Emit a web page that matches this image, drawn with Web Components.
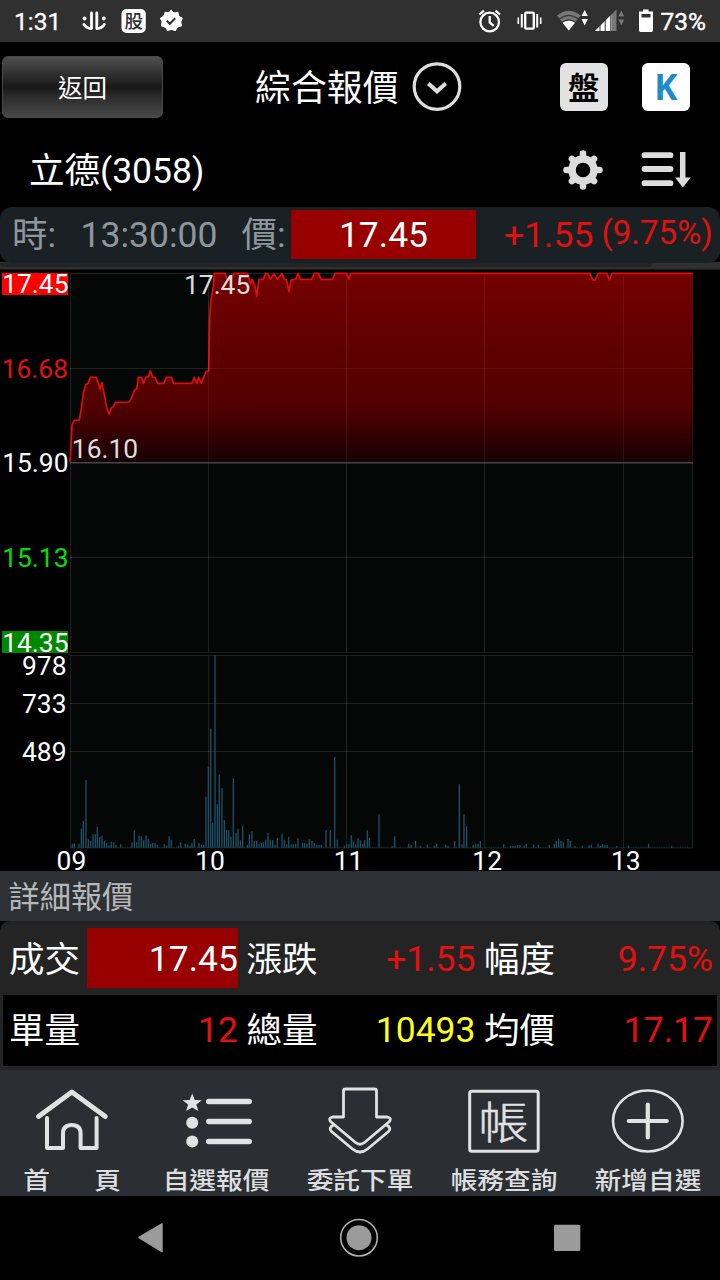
<!DOCTYPE html>
<html lang="zh-Hant">
<head>
<meta charset="utf-8">
<title>綜合報價</title>
<style>
    body {
        margin: 0;
        background: #000;
        color: #fff;
        font-family: Roboto, "Noto Sans CJK TC", sans-serif;
    }
</style>
</head>
<body>
<quote-app></quote-app>

<script>
// name: [viewBox, markup]; every icon is drawn at its viewBox size
const ICONS = {
    north: ['80 9 28 26', `<g fill="none" stroke="#fff" stroke-width="2.800" stroke-linecap="round">
        <path d="M91.500 14v15.500M96.800 14v15.500M84 25.500q2.500 4 7.500 4M104.300 25.500q-2.500 4-7.500 4"/></g>
        <g fill="#fff"><circle cx="84.600" cy="19.500" r="1.900"/><circle cx="103.800" cy="19.500" r="1.900"/></g>`],
    stock: ['120 8 26 26', `<rect x="120.500" y="9" width="24.300" height="24" rx="5" fill="#fff"/>
        <text x="132.700" y="28" text-anchor="middle" font-size="18.500" font-weight="500" fill="#303030">股</text>`],
    verified: ['159 8 24 26', `<g fill="#fff"><circle cx="171" cy="20.700" r="9.300"/>
        <path stroke="#fff" stroke-width="1.500" stroke-linejoin="round" d="M171 10.500l2.600 3.200 4-1.200 1 4 3.400 2-1.500 3.200 .7 4-4 1-2 3.600-3.700-1.200-3.800 1.200-2-3.600-4-1 .7-4-1.700-3.200 3.600-2 1-4 4 1.200z"/></g>
        <path d="M166.800 20.800l3 3 5.400-5.600" fill="none" stroke="#303030" stroke-width="2"/>`],
    alarm: ['480 8 25 26', `<g fill="none" stroke="#fff" stroke-width="2.300"><circle cx="492.700" cy="22" r="9.300"/>
        <path d="M492.700 16v6.500l4 3.300M482.400 14.500l4.500-3.900M498.500 10.600l4.500 3.900"/></g>`],
    vibrate: ['519 8 27 26', `<g fill="none" stroke="#fff" stroke-width="2.300"><rect x="528.200" y="12.700" width="8.600" height="16" rx="1"/>
        <path stroke-width="2" d="M524.800 14v13.500M540.200 14v13.500"/><path stroke-width="1.600" d="M521.300 17.500v6.500M543.700 17.500v6.500"/></g>`],
    wifi: ['558 8 33 26', `<path d="M570.800 30.500L559 15.500q11.800-9.500 23.600 0z" fill="#777"/>
        <g fill="none" stroke="#303030" stroke-width="1.200"><path d="M561.500 18.800q9.300-7 18.600 0M564.200 22.200q6.600-4.800 13.200 0"/></g>
        <path d="M570.800 30.500l-6.200-7.800q6.200-4 12.400 0z" fill="#fff"/>
        <path d="M586.700 10l3.200 6h-6.400zM586.700 25.500l3.200-6.500h-6.400z" fill="#fff"/>`],
    signal: ['595 8 31 26', `<path d="M617.500 9.500V31H596z" fill="#777"/><path d="M612.500 14.500V31H596z" fill="#fff"/>
        <path d="M601 10v22M606.200 10v22M611.800 10v22" stroke="#303030" stroke-width="1"/>
        <path d="M622.300 10.500l3 6h-6zM622.300 25.500l3-6h-6z" fill="#777"/>`],
    battery: ['638 8 16 26', `<path d="M643 9.500h5.500v2H653V30q0 2-1.500 2h-11q-1.500 0-1.500-2V11.500h4z" fill="#fff"/>
        <path d="M641.500 14h9v3.500h-9z" fill="#303030"/>`],
    down: ['412 62 50 50', `<g fill="none" stroke="#dedede"><circle cx="437" cy="86.600" r="22.800" stroke-width="3.200"/>
        <path d="M428.300 83.500l8.700 7.800 8.700-7.800" stroke-width="4"/></g>`],
    gear: ['562 149 42 42', `<g stroke="#dcdcdc" fill="none"><circle cx="583" cy="170" r="11" stroke-width="7.500"/>
        <path stroke-width="6.500" stroke-linecap="round" d="M583 153.500v4M583 182.500v4M566.500 170h4M595.500 170h4M571.900 158.900l2 2M592.100 179.100l2 2M571.900 181.100l2-2M592.100 160.900l2-2"/></g>`],
    sort: ['640 150 52 40', `<g stroke="#dcdcdc"><path stroke-width="5.800" stroke-linecap="round" d="M644.500 155.200h26M644.500 169h26M644.500 183.200h26"/>
        <path stroke-width="5.500" d="M682.700 152v27"/></g><path d="M675 177.500h15.700l-7.800 10z" fill="#dcdcdc"/>`],
    home: ['34 1085 76 70', `<g fill="none" stroke="#e0e2e3" stroke-linecap="round" stroke-linejoin="round">
        <path stroke-width="4.800" d="M38.500 1116.500L71.800 1092l33.500 24.500"/>
        <path stroke-width="4" d="M47 1118v30h16v-14.500q0-8.500 8.800-8.500t8.800 8.500V1148h16v-30"/></g>`],
    list: ['178 1085 76 70', `<path fill="#e0e2e3" d="M192.200 1093.500l2.600 6.500 7 .2-5.500 4.400 2 6.400-6.100-3.500-6.100 3.500 2-6.400-5.500-4.400 7-.2z"/>
        <g fill="#e0e2e3"><circle cx="192.200" cy="1122.800" r="6"/><circle cx="192.200" cy="1141.500" r="6"/></g>
        <path stroke="#e0e2e3" stroke-width="5.500" stroke-linecap="round" d="M208.700 1101.500h40.500M208.700 1121.500h40.500M208.700 1141.500h40.500"/>`],
    order: ['322 1085 76 70', `<g fill="none" stroke="#e0e2e3" stroke-width="2.800" stroke-linejoin="round">
        <path d="M343.500 1091q0-2 2-2h29q2 0 2 2v26h11q4.500 1 2 4.500l-25 21q-4.500 3.500-9 0l-25-21q-2.500-3.500 2-4.500h11z"/>
        <path d="M333.500 1125q-5.500 3-2 6.500l21 17.500q7.500 6 15 0l21-17.500q3.500-3.500-2-6.500"/></g>`],
    account: ['466 1085 76 70', `<rect x="469.700" y="1091.200" width="68.500" height="60" rx="2" fill="none" stroke="#e0e2e3" stroke-width="3"/>
        <text transform="translate(503.500 1138.700) scale(1.03 .9)" text-anchor="middle" font-size="49" font-weight="300" fill="#e0e2e3" stroke="#e0e2e3" stroke-width=".5">帳</text>`],
    add: ['610 1085 76 70', `<g fill="none" stroke="#e0e2e3"><ellipse cx="647.800" cy="1121" rx="34.800" ry="30.500" stroke-width="2.600"/>
        <path stroke-width="4.200" stroke-linecap="round" d="M628.800 1121h38M647.800 1104.500v33"/></g>`],
    back: ['137 1217 42 42', `<path d="M139 1237.500l23-13.500v27.500z" fill="#9b9b9b" stroke="#9b9b9b" stroke-width="1.500" stroke-linejoin="round"/>`],
    circle: ['338.500 1217 42 42', `<circle cx="359.500" cy="1237.700" r="18.300" fill="none" stroke="#b5b5b5" stroke-width="1.500"/>
        <circle cx="359.500" cy="1237.700" r="12.500" fill="#9b9b9b"/>`],
    square: ['546 1217 42 42', `<rect x="554" y="1224.700" width="26.300" height="26.300" rx="1.500" fill="#9b9b9b"/>`],
};

class UiIcon extends HTMLElement {
    connectedCallback() {
        const [box, markup] = ICONS[this.getAttribute('name')];
        const [, , w, h] = box.split(' ');
        this.attachShadow({ mode: 'open' }).innerHTML = `
            <style>
                :host { display: block; flex: none; }
                svg { display: block; overflow: visible; }
            </style>
            <svg width="${w}" height="${h}" viewBox="${box}">${markup}</svg>
        `;
    }
}

class StatusBar extends HTMLElement {
    connectedCallback() {
        this.attachShadow({ mode: 'open' }).innerHTML = `
            <style>
                :host {
                    display: flex;
                    justify-content: space-between;
                    height: 42px;
                    padding: 0 14px 0 14px;
                    background: #303030;
                    font-size: 24.5px;
                    font-weight: 500;
                    line-height: 45px;
                }
                div { display: flex; align-items: center; }
                .left { gap: 12.500px; }
                .time { width: 53.500px; font-weight: 400; -webkit-text-stroke: .3px #fff; }
                .right { gap: 13.500px; }
                .right ui-icon:nth-child(3) { margin-right: -9px; }
                .pct { margin-left: -7px; font-weight: 400; -webkit-text-stroke: .4px #fff; }
            </style>
            <div class="left">
                <span class="time">1:31</span>
                <ui-icon name="north"></ui-icon>
                <ui-icon name="stock"></ui-icon>
                <ui-icon name="verified"></ui-icon>
            </div>
            <div class="right">
                <ui-icon name="alarm"></ui-icon>
                <ui-icon name="vibrate"></ui-icon>
                <ui-icon name="wifi"></ui-icon>
                <ui-icon name="signal"></ui-icon>
                <ui-icon name="battery"></ui-icon>
                <span class="pct">73%</span>
            </div>
        `;
    }
}

class PageHeader extends HTMLElement {
    connectedCallback() {
        this.attachShadow({ mode: 'open' }).innerHTML = `
            <style>
                :host {
                    display: grid;
                    grid-template-columns: 253px 1fr auto;
                    align-items: center;
                    height: 90px;
                    padding: 0 30.500px 0 2px;
                    box-sizing: border-box;
                }
                button {
                    width: 161px;
                    height: 62px;
                    padding: 3px 0 0;
                    border: 1px solid #4a4a4a;
                    border-radius: 6px;
                    background: linear-gradient(#505050, #303030 28%, #181818 50%, #2c2c2c 66%, #474747);
                    color: #fff;
                    font: 24.500px/57px Roboto, "Noto Sans CJK TC", sans-serif;
                }
                .title { display: flex; align-items: center; gap: 13.500px; font-size: 35.900px; line-height: 50px; }
                .title span { padding-top: 3.500px; }
                .tools { display: flex; gap: 34.500px; }
                .tool {
                    width: 47.500px;
                    height: 47.500px;
                    border-radius: 6px;
                    background: #e2e2e2;
                    color: #000;
                    font-size: 31px;
                    font-weight: 700;
                    line-height: 52px;
                    text-align: center;
                }
                .k { background: #fff; color: #1c8ccb; font: 700 35px/48px "Open Sans", sans-serif; }
            </style>
            <button>返回</button>
            <div class="title"><span>綜合報價</span><ui-icon name="down"></ui-icon></div>
            <div class="tools"><div class="tool">盤</div><div class="tool k">K</div></div>
        `;
    }
}

class StockTitle extends HTMLElement {
    connectedCallback() {
        this.attachShadow({ mode: 'open' }).innerHTML = `
            <style>
                :host {
                    display: flex;
                    align-items: center;
                    gap: 36px;
                    height: 75px;
                    padding: 0 28px 0 29px;
                    font-size: 35.500px;
                    line-height: 71px;
                }
                .name { flex: 1; padding-top: 4px; }
            </style>
            <span class="name"><slot></slot></span>
            <ui-icon name="gear"></ui-icon>
            <ui-icon name="sort"></ui-icon>
        `;
    }
}

class QuoteBar extends HTMLElement {
    connectedCallback() {
        this.attachShadow({ mode: 'open' }).innerHTML = `
            <style>
                :host {
                    display: block;
                    height: 63px;
                    background: linear-gradient(#000 55px, #303030 55px 62px, #1a1a1a 62px);
                }
                .bar {
                    display: grid;
                    grid-template-columns: 68.500px 161px 49.500px 185px 129px 1fr;
                    height: 56px;
                    padding-left: 12px;
                    border-radius: 12px;
                    background: #1a2125;
                    color: #8f969e;
                    font-size: 35.500px;
                    line-height: 56px;
                }
                .lip { width: 652px; height: 4px; background: #212325; border-radius: 0 0 9px 9px; }
                .price { align-self: start; height: 49px; margin-top: 3px; background: #980000; color: #fff; line-height: 50px; text-align: center; }
                .up { color: #e2100f; }
                .diff { padding-left: 28px; }
                .pct { margin-left: -3.500px; font-size: 33px; line-height: 52px; }
            </style>
            <div class="bar">
                <span>時:</span>
                <span>13:30:00</span>
                <span>價:</span>
                <span class="price">17.45</span>
                <span class="up diff">+1.55</span>
                <span class="up pct">(9.75%)</span>
            </div>
            <div class="lip"></div>
        `;
    }
}

// price polyline and volume bars, in thirds of a pixel
const PRICE = `210,606 213,560 216,495 223,481 238,480 244,445 250,400 257,374 264,370 271,352 289,352 295,370
    300,388 306,368 313,405 320,442 327,463 334,444 340,440 346,427 389,426 396,410 403,390 410,387 415,352
    424,352 430,370 437,352 445,350 451,332 458,352 465,352 473,370 492,370 499,352 514,352 521,370 576,370
    583,352 590,370 596,352 604,370 611,352 618,335 626,333 629,180 632,125 640,80 643,40 675,40 682,58
    694,58 701,40 742,40 752,70 757,58 764,75 770,108 777,58 790,58 797,40 804,42 811,58 822,40 832,58
    846,40 853,58 860,60 867,95 873,60 887,58 894,40 901,58 935,58 943,40 956,40 963,58 998,58 1005,40
    1040,40 1046,58 1053,40 1770,40 1778,60 1786,60 1794,40 1820,40 1828,60 1836,40 2078,40`;
const VOLUME = [
    [217, 12], [223, 13], [237, 12], [244, 57], [250, 80], [258, 203], [265, 25], [272, 20], [279, 42], [286, 40],
    [292, 63], [299, 32], [306, 36], [313, 20], [320, 14], [327, 7], [334, 18], [341, 16], [348, 8], [362, 10],
    [396, 16], [403, 52], [410, 16], [417, 36], [424, 34], [431, 22], [438, 38], [445, 26], [452, 12], [458, 14],
    [465, 13], [472, 9], [493, 10], [500, 6], [507, 34], [514, 23], [535, 6], [542, 16], [556, 12], [563, 9],
    [570, 6], [576, 14], [583, 26], [597, 14], [604, 9], [611, 8], [618, 153], [625, 243], [632, 357], [638, 75],
    [645, 577], [652, 130], [658, 219], [666, 178], [673, 82], [680, 53], [686, 52], [693, 33], [700, 208], [708, 45],
    [714, 56], [721, 22], [728, 66], [742, 8], [748, 40], [756, 50], [763, 20], [770, 20], [777, 10], [784, 14],
    [790, 16], [797, 24], [804, 44], [811, 24], [818, 23], [825, 8], [832, 29], [846, 42], [853, 24], [860, 10],
    [866, 32], [873, 10], [880, 10], [887, 12], [894, 28], [908, 15], [914, 14], [921, 12], [928, 25], [936, 20],
    [943, 14], [950, 9], [957, 8], [964, 8], [978, 53], [991, 53], [1004, 272], [1012, 24], [1033, 6], [1040, 10],
    [1047, 10], [1054, 37], [1060, 18], [1067, 10], [1074, 28], [1081, 22], [1088, 12], [1094, 22], [1102, 52], [1108, 30],
    [1137, 100], [1177, 5], [1184, 34], [1226, 12], [1233, 9], [1247, 20], [1261, 6], [1282, 9], [1303, 6], [1310, 12],
    [1337, 9], [1344, 5], [1364, 20], [1378, 190], [1386, 10], [1392, 100], [1400, 64], [1420, 9], [1427, 12], [1434, 12],
    [1441, 20], [1511, 10], [1532, 5], [1539, 6], [1546, 6], [1553, 8], [1560, 8], [1572, 6], [1579, 12], [1601, 9],
    [1615, 9], [1648, 8], [1663, 12], [1669, 20], [1676, 26], [1683, 20], [1690, 18], [1704, 26], [1711, 20], [1725, 5],
    [1747, 6], [1767, 7], [1774, 9], [1794, 12], [1801, 6], [1808, 10], [1815, 8], [1822, 8], [1850, 5], [1885, 6],
    [1946, 12], [2015, 4],
];

class PriceChart extends HTMLElement {
    connectedCallback() {
        const bars = VOLUME.map(([x, h]) => `M${x} 623v${-h}`).join('');
        const label = (x, y, text, fill = '#fff', anchor = 'end') =>
            `<text x="${x}" y="${y}" fill="${fill}" text-anchor="${anchor}">${text}</text>`;

        this.attachShadow({ mode: 'open' }).innerHTML = `
            <style>
                :host { display: block; height: 601px; }
                svg { display: block; overflow: visible; font-size: 26.400px; }
                .grid { fill: none; stroke: #fff; stroke-opacity: .11; }
            </style>
            <svg width="720" height="601" viewBox="0 270 720 601">
                <linearGradient id="fill" x1="0" y1="0" x2="0" y2="1">
                    <stop offset="0" stop-color="#790000"/>
                    <stop offset=".45" stop-color="#600000"/>
                    <stop offset=".7" stop-color="#560000"/>
                    <stop offset="1" stop-color="#170003"/>
                </linearGradient>
                <path d="M70 273h623v379H70zM70 655.500h623V848H70z" fill="#050706"/>
                <path class="grid" d="M70.500 273.500h622v379h-622zM70.500 655.500h622v192.500h-622zM70 368.500h623M70 557.500h623M70 703.500h623M70 751.500h623M208.500 273v379M346.500 273v379M484.500 273v379M623.500 273v379M208.500 656v192M346.500 656v192M484.500 656v192M623.500 656v192"/>
                <g transform="translate(0 260) scale(.33333)">
                    <polygon points="${PRICE} 2078,606" fill="url(#fill)" fill-opacity=".96"/>
                    <polyline points="${PRICE}" fill="none" stroke="#e00d0d" stroke-width="5" stroke-linejoin="round"/>
                </g>
                <path d="M208.500 300v162M346.500 276v186M484.500 276v186M623.500 276v186M208 368.500h485" stroke="#fff" stroke-opacity=".06"/>
                <path d="M70 462.700h623" stroke="#43464a" stroke-width="1.500"/>
                <g transform="translate(0 640) scale(.33333)">
                    <path d="${bars}" stroke="#1a5168" stroke-width="4"/>
                    <path d="M213 621.500H2075" stroke="#1a5168" stroke-width="3" stroke-dasharray="3 4" opacity=".5"/>
                </g>
                <path d="M2 273h66v22H2z" fill="#f00"/>
                <path d="M2 631h66v22H2z" fill="#080"/>
                ${label(68.5, 293, '17.45')}
                ${label(68, 377.7, '16.68', '#e2100f')}
                ${label(68.5, 472.2, '15.90')}
                ${label(68.5, 566.8, '15.13', '#00e000')}
                ${label(68.5, 651.5, '14.35')}
                ${label(66.5, 674.5, '978')}
                ${label(66.5, 713, '733')}
                ${label(66.5, 761, '489')}
                ${label(184, 293.7, '17.45', '#ddd', 'start')}
                ${label(71.8, 458.3, '16.10', '#ddd', 'start')}
                ${['09', '10', '11', '12', '13'].map((h, i) => label(71.4 + i * 138.6, 869.5, h, '#fff', 'middle')).join('')}
            </svg>
        `;
    }
}

class DetailCell extends HTMLElement {
    connectedCallback() {
        this.attachShadow({ mode: 'open' }).innerHTML = `
            <style>
                :host { display: flex; align-items: center; gap: 6px; font-size: 35.500px; line-height: 62px; }
                .label { flex: none; width: 72px; height: 60px; line-height: 65px; }
                .value {
                    flex: 1;
                    height: 60px;
                    text-align: right;
                    color: var(--value-color, #fff);
                    background: var(--value-background, none);
                }
            </style>
            <span class="label">${this.getAttribute('label')}</span>
            <span class="value"><slot></slot></span>
        `;
    }
}

class DetailPanel extends HTMLElement {
    connectedCallback() {
        this.attachShadow({ mode: 'open' }).innerHTML = `
            <style>
                :host { display: block; height: 199px; }
                h2 {
                    margin: 0;
                    height: 50px;
                    padding-left: 8.500px;
                    background: #2d3135;
                    color: #b5b8ba;
                    font-size: 31.200px;
                    font-weight: 400;
                    line-height: 54px;
                }
                .panel { height: 149px; padding: 0 3px; box-sizing: border-box; border-radius: 10px 10px 0 0; background: #242424; }
                .row {
                    display: grid;
                    grid-template-columns: 229px 229px 1fr;
                    column-gap: 8.500px;
                    height: 74px;
                    padding: 0 4px 0 6px;
                }
                .last { height: 71px; background: #000; }
                .last detail-cell { height: 68px; }
                detail-cell { --value-color: #e2100f; }
                .deal { --value-color: #fff; --value-background: #980000; }
                .total { --value-color: #ffff1a; }
            </style>
            <h2>詳細報價</h2>
            <div class="panel">
                <div class="row">
                    <detail-cell class="deal" label="成交">17.45</detail-cell>
                    <detail-cell label="漲跌">+1.55</detail-cell>
                    <detail-cell label="幅度">9.75%</detail-cell>
                </div>
                <div class="row last">
                    <detail-cell label="單量">12</detail-cell>
                    <detail-cell class="total" label="總量">10493</detail-cell>
                    <detail-cell label="均價">17.17</detail-cell>
                </div>
            </div>
        `;
    }
}

class TabItem extends HTMLElement {
    connectedCallback() {
        this.attachShadow({ mode: 'open' }).innerHTML = `
            <style>
                :host { display: flex; flex-direction: column; align-items: center; padding-top: 15px; }
                .label {
                    display: flex;
                    justify-content: space-between;
                    width: 96px;
                    margin-top: 7.500px;
                    color: #dcdedf;
                    font-size: 24px;
                    font-weight: 500;
                    line-height: 36px;
                    transform: scaleX(1.11);
                }
            </style>
            <ui-icon name="${this.getAttribute('icon')}"></ui-icon>
            <span class="label"><slot></slot></span>
        `;
    }
}

class TabBar extends HTMLElement {
    connectedCallback() {
        this.attachShadow({ mode: 'open' }).innerHTML = `
            <style>
                :host {
                    display: grid;
                    grid-template-columns: repeat(5, 144px);
                    height: 126px;
                    background: #2b2f33;
                }
                .first { margin-left: 4px; }
                .last { margin-right: 4px; }
            </style>
            <tab-item icon="home"><span class="first">首</span><span class="last">頁</span></tab-item>
            <tab-item icon="list">自選報價</tab-item>
            <tab-item icon="order">委託下單</tab-item>
            <tab-item icon="account">帳務查詢</tab-item>
            <tab-item icon="add">新增自選</tab-item>
        `;
    }
}

class SystemNav extends HTMLElement {
    connectedCallback() {
        this.attachShadow({ mode: 'open' }).innerHTML = `
            <style>
                :host {
                    display: flex;
                    justify-content: space-between;
                    align-items: center;
                    height: 84px;
                    padding: 0 132px 0 137px;
                    box-sizing: border-box;
                }
                ui-icon:nth-of-type(2) { margin-left: -6.500px; }
            </style>
            <ui-icon name="back"></ui-icon>
            <ui-icon name="circle"></ui-icon>
            <ui-icon name="square"></ui-icon>
        `;
    }
}

class QuoteApp extends HTMLElement {
    connectedCallback() {
        this.attachShadow({ mode: 'open' }).innerHTML = `
            <style>
                :host { display: block; width: 720px; height: 1280px; overflow: hidden; background: #000; }
            </style>
            <status-bar></status-bar>
            <page-header></page-header>
            <stock-title>立德(3058)</stock-title>
            <quote-bar></quote-bar>
            <price-chart></price-chart>
            <detail-panel></detail-panel>
            <tab-bar></tab-bar>
            <system-nav></system-nav>
        `;
    }
}

customElements.define('ui-icon', UiIcon);
customElements.define('status-bar', StatusBar);
customElements.define('page-header', PageHeader);
customElements.define('stock-title', StockTitle);
customElements.define('quote-bar', QuoteBar);
customElements.define('price-chart', PriceChart);
customElements.define('detail-cell', DetailCell);
customElements.define('detail-panel', DetailPanel);
customElements.define('tab-item', TabItem);
customElements.define('tab-bar', TabBar);
customElements.define('system-nav', SystemNav);
customElements.define('quote-app', QuoteApp);
</script>
</body>
</html>
